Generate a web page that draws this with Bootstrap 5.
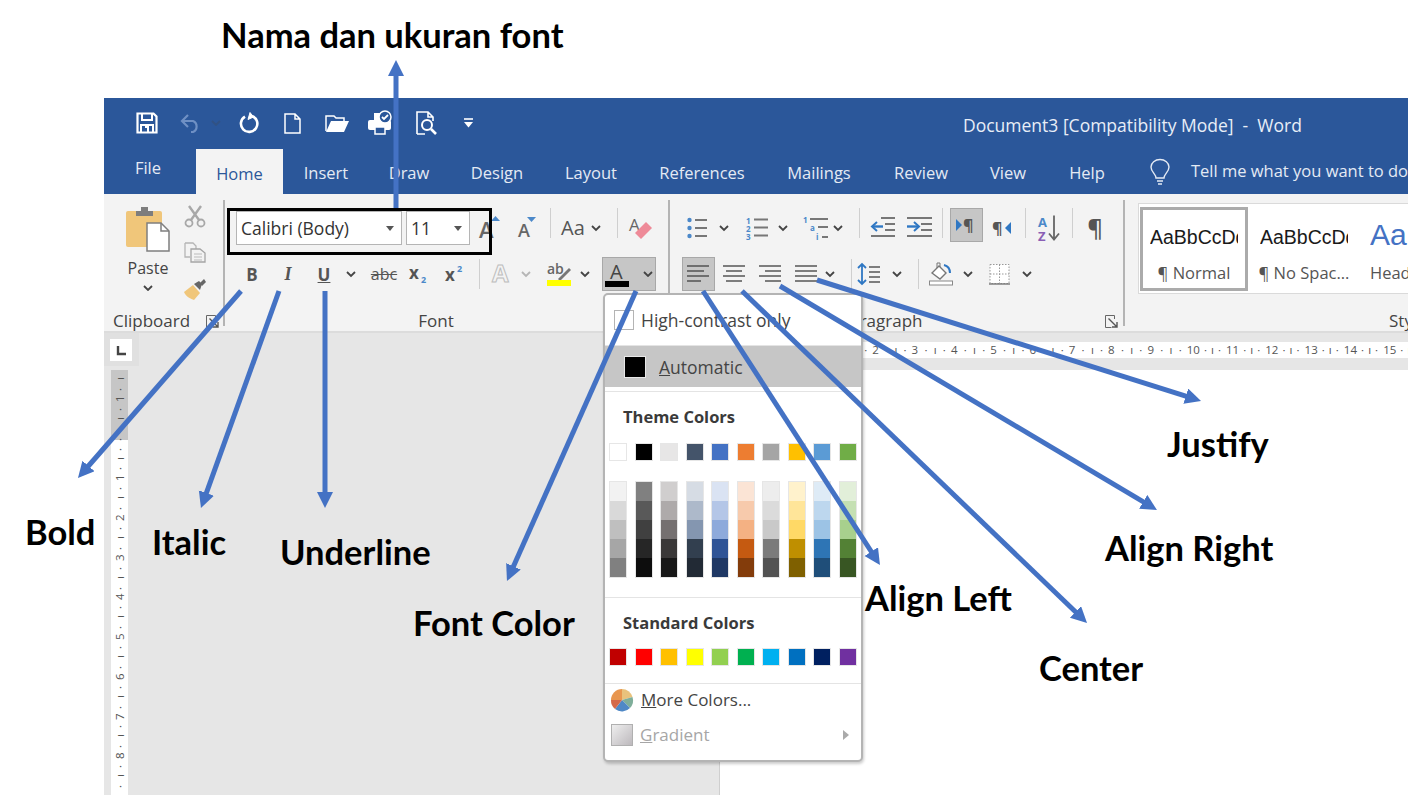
<!DOCTYPE html>
<html lang="id"><head><meta charset="utf-8"><title>Word font tools</title>
<link rel="stylesheet" href="https://cdn.jsdelivr.net/npm/bootstrap@5.3.0/dist/css/bootstrap.min.css">
<style>
html,body{margin:0;height:795px;overflow:hidden;background:#fff}
body{font-family:"Open Sans","Noto Sans",sans-serif;position:relative;color:#444}
svg{display:block;overflow:visible}
svg text{font-family:"Open Sans",sans-serif}
.note{position:absolute;font-family:Lato,"Liberation Sans",sans-serif;font-weight:700;font-size:34.5px;line-height:40px;color:#000;white-space:nowrap}
.n1{left:221px;top:15px}.n2{left:25px;top:512px}.n3{left:152px;top:522px}.n4{left:280px;top:532px}.n5{left:413px;top:603px}.n6{left:865px;top:578px}.n7{left:1039px;top:648px}.n8{left:1105px;top:528px}.n9{left:1167px;top:424px}
.overlay{position:absolute;left:0;top:0;width:1408px;height:795px;z-index:1100;pointer-events:none}
.word{margin-left:104px;margin-top:98px;width:1304px;height:697px;overflow:hidden;position:absolute;top:0;left:0}
.titlebar{height:50px;background:#2b579a;color:#e8eef7}
.qat{display:grid;grid-template-columns:76px 12px 38px 28px 58px 32px 54px 40px 42px;padding-left:5px;width:385px}
.qat>*,.tabs>*,.row1>*,.row2>*{justify-self:center;align-self:center}
.doc-title{margin:4px 0 0 474px;font-size:17.5px;white-space:pre}
.tabs{display:grid;grid-template-columns:92px 87px 86px 80px 96px 92px 130px 104px 100px 74px 84px 62px auto;height:46px;background:#2b579a;color:#e4eaf4;font-size:16.5px;padding-top:1px;line-height:1}
.tabs>span{padding-top:3px}
.tabs>.tab-file{padding:0 4px 6px 0}
.tabs>.tab-home{justify-self:stretch;align-self:stretch;background:#f3f3f3;color:#2b579a;text-align:center;padding-top:17px}
.tabs>.tab-tell{justify-self:start;white-space:nowrap;padding:0 0 1px}
.ribbon{height:139px;background:#f3f3f3;border-bottom:2px solid #dcdcdc;color:#555}
.grp{display:flex;flex-direction:column;height:137px;position:relative;flex:none}
.grp-clip{width:119px}.grp-font{width:443px}.grp-para{width:453px}.grp-styles{flex:1 1 0;min-width:0;overflow:hidden}
.vsep{width:2px;height:126px;background:#b4b4b4;margin-top:6px;flex:none}
.glabel{margin-top:auto;height:22px;padding-top:2px;font-size:17px;line-height:20px;color:#444;display:flex;align-items:center}
.row1,.row2{display:grid}
.row1>*{height:40px;display:flex;align-items:center;justify-content:center;align-self:start}
.row2>*{height:38px;display:flex;align-items:center;justify-content:center}
.font1{grid-template-columns:245px 38px 36px 8px 38px 8px 34px 14px;margin:14px 0 0 2px;height:47px}
.font2{grid-template-columns:36px 36px 36px 18px 48px 24px 47px 12px 22px 26px 40px 12px 76px;margin-left:9px;height:38px}
.para1{grid-template-columns:16px 38px 28px 24px 40px 6px 19px 46px 26px 11px 46px 26px 11px 46px 8px 30px;margin:14px 0 0 19px;height:47px}
.para2{grid-template-columns:32px 40px 32px 40px 8px 18px 34px 22px 11px 44px 10px 52px 4px;margin-left:12px;height:38px}
.fontbox{border:3px solid #000;width:265px;height:47px!important;display:flex;justify-self:start!important;gap:4px;padding:0 0 7px 6px;align-items:flex-start!important;justify-content:flex-start!important;z-index:2}
.combo{height:34px;background:#fff;border:1px solid #b5b5b5;display:flex;align-items:center;justify-content:space-between;padding:0 7px 0 4px;font-size:17.5px;color:#333}
.combo-name{width:166px}.combo-size{width:64px}
.tri{width:0;height:0;border:4px solid transparent;border-top:5px solid #555;border-bottom:0}
.vs{width:1px;height:30px!important;background:#cfcfcf}
.vs-end{justify-self:end!important}.vs-start{justify-self:start!important}
.gb{font:700 17px/1 "Open Sans",sans-serif;color:#555}
.gi{font:italic 600 18px/1 "Liberation Serif",serif;color:#555}
.pressed{width:54px;height:34px!important;background:#c6c6c6;border:1px solid #a8a8a8;gap:14px}
.pressed-sq{width:33px;height:34px!important;background:#c6c6c6;border:1.5px solid #a8a8a8}
.clip-main{display:flex;padding-left:18px;height:115px}
.paste{width:52px;display:flex;flex-direction:column;align-items:center;padding-top:12px;font-size:16px;color:#444;line-height:1}
.paste span{margin:9px 0 9px}
.clip-side{width:42px;display:flex;flex-direction:column;align-items:center;padding-top:11px;gap:15px}
.clip-label{padding-left:9px;justify-content:space-between;padding-right:4px}
.launch{width:13px;height:13px;flex:none}
.font-label{justify-content:center;padding-right:21px}
.para-label{padding-left:170px;justify-content:space-between;padding-right:5px}
.gallery{margin:9px 0 0 13px;height:91px;background:#fff;border:1px solid #dadada;border-right:0;display:flex;padding-top:3px;overflow:hidden}
.sty{width:112px;height:84px;flex:none;display:flex;flex-direction:column;align-items:center;overflow:hidden;font-size:16.5px;color:#555}
.sty b{font:400 19.5px/1 "Liberation Sans",sans-serif;color:#1a1a1a;margin-top:21px;height:37px;white-space:nowrap;width:88px;overflow:hidden}
.sty-on{width:108px;border:3px solid #ababab;margin-left:1px}
.sty-on b{margin-top:18px}
.sty small{font-size:16.5px;line-height:1;margin-top:0}
.sty-h{margin-left:-1px}
.sty-h b{font-size:30px;color:#4472c4;margin-top:13px;height:42px;width:90px}
.sty-h small{margin-top:3px;margin-left:11px;align-self:flex-start}
.styles-label{padding-left:264px;white-space:nowrap}
.workspace{height:510px;background:#e6e6e6;position:relative}
.topline{height:37px;display:flex}
.corner{width:35px;height:33px;background:#e0e0e0;padding:6px;flex:none}
.corner-in{width:22px;height:22px;background:#fff;display:flex;align-items:center;justify-content:center}
.hruler{margin:9px 0 0 581px;height:16px;background:linear-gradient(90deg,#c6c6c6 77px,#fff 77px);flex:1;display:flex;padding-left:113px;font-size:11.5px;line-height:16px;color:#555}
.hcell{width:39.3px;flex:none;display:flex;justify-content:space-between;padding-right:5px}
.pagearea{display:flex;height:473px}
.vruler{margin-left:7px;width:17px;background:linear-gradient(#c6c6c6 70px,#fff 70px);overflow:hidden;flex:none;font-size:11.5px;color:#555;text-align:center;line-height:1;padding-top:4px}
.vcell{height:39.7px;display:flex;flex-direction:column;justify-content:space-between;align-items:center}
.vlead{height:20px;display:flex;flex-direction:column;justify-content:space-evenly;align-items:center}
.vcell span,.vlead span{writing-mode:vertical-rl;transform:rotate(180deg);line-height:17px;height:10px;display:block}
.greyzone{width:592px;flex:none;border-right:1px solid #cfcfcf}
.paper{flex:1;background:#fff}
.fc-menu{position:absolute;left:603px;top:293px;width:260px;height:469px;margin:0;padding:0;border:2px solid #b4b4b4;border-radius:5px;background:#fff;box-shadow:1px 2px 3px rgba(0,0,0,.2);font-size:17.5px;color:#444;overflow:hidden}
.m-hc{height:50px;display:flex;align-items:center;padding-left:9px;gap:7px}
.m-hc i{width:20px;height:20px;border:1.5px solid #b4b4b4;flex:none}
.m-line{height:1px;background:#e4e4e4;margin:0}
.m-auto{height:41px;margin-top:1px;background:#c6c6c6;display:flex;align-items:center;padding-left:19px;gap:13px}
.m-auto span{margin-top:2px}
.m-auto i{width:22px;height:22px;background:#000;border:1px solid #e8e8e8;flex:none}
.m-head{font-weight:700;font-size:16.5px;color:#3a3a3a;padding-left:18px;line-height:20px}
.h-theme{margin-top:15px}.h-std{margin-top:15px}
.m-grid{display:grid;grid-template-columns:repeat(10,25.5px);padding-left:4px}
.m-theme{margin-top:16px}.m-shades{margin-top:20px}.m-standard{margin-top:15px}
.sw{display:block;width:18px;height:18px;border:1px solid #e6e6e6}
.col5{display:flex;flex-direction:column;width:18px;border:1px solid #e6e6e6}
.col5 span{height:19px}
.gap-a{margin-top:19px}.gap-b{margin-top:17px}
.m-row{height:38px;font-size:17px;display:flex;align-items:center;padding-left:5px;gap:7px;position:relative}
.m-more{height:32px}
.m-grad{color:#a6a6a6}
.m-grad i{width:22px;height:22px;background:linear-gradient(135deg,#eee,#bdb9bd);border:1.5px solid #b0b0b0;margin-left:1px;flex:none}
.m-tri{margin-left:auto;margin-right:12px;width:0;height:0;border:5px solid transparent;border-left:6px solid #aaa;border-right:0}
</style></head>
<body>
<svg width="0" height="0" class="position-absolute"><defs>
<symbol id="chev" viewBox="0 0 10 6"><path d="M1 1l4 4 4-4" fill="none" stroke="#444" stroke-width="1.8"/></symbol>
<symbol id="launch" viewBox="0 0 13 13"><path d="M.5 7V.5h9V4M.5 7v5.5h6" fill="none" stroke="#666"/><path d="M3.5 3.5l8 8M12 7v5H7" fill="none" stroke="#555" stroke-width="1.4"/></symbol>
<marker id="ah" markerUnits="userSpaceOnUse" markerWidth="18" markerHeight="18" refX="10" refY="8" orient="auto"><path d="M0 0L16 8L0 16z" fill="#4472c4"/></marker>
</defs></svg>

<div class="word">
  <div class="titlebar d-flex align-items-center">
    <div class="qat">
      <svg width="22" height="22" viewBox="0 0 22 22"><path d="M1.500 1.500h16l3 3v16h-19z" fill="none" stroke="#fff" stroke-width="2.200"/><path d="M6 2v6h10V2" fill="none" stroke="#fff" stroke-width="2"/><path d="M5 20v-7h12v7M9 15h3v5" fill="none" stroke="#fff" stroke-width="2"/></svg>
      <svg width="22" height="20" viewBox="0 0 22 20"><path d="M8 2L2 8l6 6M2 8h11a6 6 0 0 1 0 11h-2" fill="none" stroke="#6f90c4" stroke-width="2.200"/></svg>
      <svg width="10" height="6"><use href="#chev" opacity=".25"/></svg>
      <svg width="20" height="22" viewBox="0 0 20 22"><path d="M13 4a8.200 8.200 0 1 1-7 .6" fill="none" stroke="#fff" stroke-width="2.600"/><path d="M11 .5l3.500 4.500-5.500 2.500z" fill="#fff" stroke="#fff"/></svg>
      <svg width="17" height="21" viewBox="0 0 17 21"><path d="M1 1h10l5 5v14H1zM11 1v5h5" fill="none" stroke="#fff" stroke-width="1.500"/></svg>
      <svg width="25" height="20" viewBox="0 0 25 20"><path d="M1 18V3h8l2 2h8v3" fill="none" stroke="#fff" stroke-width="1.500"/><path d="M1 19l5-11h18l-5 11z" fill="#fff"/></svg>
      <svg width="26" height="26" viewBox="0 0 26 26"><rect x="1" y="10" width="23" height="10" rx="2" fill="#fff"/><rect x="7" y="3" width="11" height="8" fill="#fff"/><rect x="8" y="17" width="10" height="7" fill="#2b579a" stroke="#fff" stroke-width="1.500"/><circle cx="18" cy="7" r="6" fill="#2b579a" stroke="#fff" stroke-width="1.500"/><path d="M15 7l2 2 4-4" fill="none" stroke="#fff" stroke-width="1.800"/></svg>
      <svg width="22" height="25" viewBox="0 0 22 25"><path d="M1 23V1h11l5 5v4M12 1v5h5M9 23H1" fill="none" stroke="#fff" stroke-width="1.600"/><circle cx="11" cy="14" r="5" fill="none" stroke="#fff" stroke-width="2"/><path d="M15 18l5 5" stroke="#fff" stroke-width="2.600"/></svg>
      <svg width="9" height="10" viewBox="0 0 9 10"><path d="M0 1h9" stroke="#fff" stroke-width="1.600"/><path d="M0 4h9L4.500 9.500z" fill="#fff"/></svg>
    </div>
    <div class="doc-title">Document3 [Compatibility Mode]  -  Word</div>
  </div>
  <nav class="tabs">
    <span class="tab-file">File</span><span class="tab-home">Home</span><span>Insert</span><span>Draw</span><span>Design</span><span>Layout</span><span>References</span><span>Mailings</span><span>Review</span><span>View</span><span>Help</span>
    <svg width="20" height="26" viewBox="0 0 20 26"><path d="M6 19c0-4-5-6-5-11a9 7.500 0 0 1 18 0c0 5-5 7-5 11z" fill="none" stroke="#e4eaf4" stroke-width="1.400"/><path d="M7 22h6M8 25h4" stroke="#e4eaf4" stroke-width="1.400"/></svg>
    <span class="tab-tell">Tell me what you want to do</span>
  </nav>
  <div class="ribbon d-flex">
    <section class="grp grp-clip">
      <div class="clip-main">
        <div class="paste">
          <svg width="44" height="45" viewBox="0 0 44 45"><rect x="0" y="5" width="36" height="36" rx="2" fill="#f0c67a"/><path d="M10 5h5V1h7v4h5v5H10z" fill="#7d7d7d"/><path d="M21 17h14l8 8v20H21z" fill="#fff" stroke="#7f7f7f" stroke-width="1.500"/><path d="M35 17v8h8" fill="none" stroke="#7f7f7f" stroke-width="1.500"/></svg>
          <span>Paste</span>
          <svg width="10" height="6"><use href="#chev"/></svg>
        </div>
        <div class="clip-side">
          <svg width="22" height="22" viewBox="0 0 22 22"><path d="M5 1l10 14M17 1L7 15" stroke="#a8a8a8" stroke-width="2.400"/><circle cx="5" cy="18" r="3.500" fill="none" stroke="#a8a8a8" stroke-width="1.800"/><circle cx="17" cy="18" r="3.500" fill="none" stroke="#a8a8a8" stroke-width="1.800"/></svg>
          <svg width="22" height="21" viewBox="0 0 22 21"><path d="M1 1h8l3 3v3M1 1v14h5" fill="none" stroke="#b5b5b5" stroke-width="1.300"/><path d="M7 7h9l5 4v9H7z" fill="#f3f3f3" stroke="#a5a5a5" stroke-width="1.300"/><path d="M10 12h8M10 15h8M10 18h8" stroke="#bbb"/></svg>
          <svg width="24" height="22" viewBox="0 0 24 22"><path d="M1 14l9-7 7 8-6 7C8 21 3 19 1 14z" fill="#f0c67a"/><path d="M11 6l5-3 3 3-2 6z" fill="#666"/><path d="M17 5l4-4 2 3-4 4z" fill="#666"/></svg>
        </div>
      </div>
      <div class="glabel clip-label"><span>Clipboard</span><svg class="launch"><use href="#launch"/></svg></div>
    </section>
    <div class="vsep"></div>
    <section class="grp grp-font">
      <div class="row1 font1">
        <div class="fontbox"><div class="combo combo-name"><span>Calibri (Body)</span><i class="tri"></i></div><div class="combo combo-size"><span>11</span><i class="tri"></i></div></div>
        <svg width="26" height="24" viewBox="0 0 26 24"><text x="1" y="22" font-size="22" font-weight="600" fill="#666">A</text><path d="M13 5l4.500-5 4.500 5z" fill="#4b88c9"/></svg>
        <svg width="22" height="22" viewBox="0 0 22 22"><text x="1" y="20" font-size="18" font-weight="600" fill="#666">A</text><path d="M10 0h9l-4.500 5z" fill="#4b88c9"/></svg>
        <i class="vs"></i>
        <span class="fs-5 fst-normal">Aa</span>
        <svg width="10" height="6"><use href="#chev"/></svg>
        <i class="vs"></i>
        <svg width="24" height="24" viewBox="0 0 24 24"><text x="0" y="15" font-size="17" fill="#666">A</text><path d="M6 17l11-11 6 6-11 11z" fill="#ee8a98"/></svg>
      </div>
      <div class="row2 font2">
        <span class="gb">B</span><span class="gi">I</span><span class="gb text-decoration-underline">U</span>
        <svg width="10" height="6"><use href="#chev"/></svg>
        <span class="text-decoration-line-through">abc</span>
        <svg width="22" height="20" viewBox="0 0 22 20"><text x="0" y="15" font-size="17" font-weight="700" fill="#555">x</text><text x="12" y="19" font-size="9" font-weight="700" fill="#4b88c9">2</text></svg>
        <svg width="22" height="20" viewBox="0 0 22 20"><text x="0" y="17" font-size="17" font-weight="700" fill="#555">x</text><text x="12" y="8" font-size="9" font-weight="700" fill="#4b88c9">2</text></svg>
        <i class="vs vs-start"></i>
        <svg width="20" height="20" viewBox="0 0 20 20"><text x="0" y="18" font-size="24" font-weight="700" fill="#f3f3f3" stroke="#bdbdbd">A</text></svg>
        <svg width="10" height="6"><use href="#chev" opacity=".35"/></svg>
        <svg width="25" height="24" viewBox="0 0 25 24"><text x="0" y="12" font-size="14" font-weight="600" fill="#666">ab</text><path d="M11 17l11-11 2 2-11 11z" fill="#777"/><rect x="0" y="18" width="24" height="6" fill="#ff0"/></svg>
        <svg width="10" height="6"><use href="#chev"/></svg>
        <div class="pressed"><svg width="24" height="26" viewBox="0 0 24 26"><text x="5" y="18" font-size="20" fill="#444">A</text><rect x="0" y="20" width="24" height="6" fill="#000"/></svg><svg width="10" height="6"><use href="#chev"/></svg></div>
      </div>
      <div class="glabel font-label">Font</div>
    </section>
    <div class="vsep"></div>
    <section class="grp grp-para">
      <div class="row1 para1">
        <svg width="20" height="22" viewBox="0 0 20 22"><g fill="#4b88c9"><circle cx="2.500" cy="3" r="2.200"/><circle cx="2.500" cy="11" r="2.200"/><circle cx="2.500" cy="19" r="2.200"/></g><path d="M8 3h12M8 11h12M8 19h12" stroke="#777" stroke-width="1.800"/></svg>
        <svg width="10" height="6"><use href="#chev"/></svg>
        <svg width="22" height="23" viewBox="0 0 22 23"><g fill="#4b88c9" font-size="8" font-weight="700"><text x="0" y="7">1</text><text x="0" y="15">2</text><text x="0" y="23">3</text></g><path d="M8 3h14M8 11h14M8 19h14" stroke="#777" stroke-width="1.800"/></svg>
        <svg width="10" height="6"><use href="#chev"/></svg>
        <svg width="25" height="24" viewBox="0 0 25 24"><g fill="#4b88c9" font-size="8" font-weight="700"><text x="0" y="7">1</text><text x="7" y="15">a</text><text x="13" y="24">i</text></g><path d="M7 3h18M15 11h10M19 21h6" stroke="#777" stroke-width="1.800"/></svg>
        <svg width="10" height="6"><use href="#chev"/></svg>
        <i class="vs vs-end"></i>
        <svg width="24" height="22" viewBox="0 0 24 22"><path d="M10 1h14M14 7h10M14 13h10M0 19h24" stroke="#777" stroke-width="1.800"/><path d="M1 9.500h11" stroke="#2f77c3" stroke-width="2.400"/><path d="M6 5L1 9.500 6 14" fill="none" stroke="#2f77c3" stroke-width="2"/></svg>
        <svg width="25" height="22" viewBox="0 0 25 22"><path d="M0 1h25M14 7h11M14 13h11M0 19h25" stroke="#777" stroke-width="1.800"/><path d="M0 9.500h11" stroke="#2f77c3" stroke-width="2.400"/><path d="M7 5l5 4.500L7 14" fill="none" stroke="#2f77c3" stroke-width="2"/></svg>
        <i class="vs vs-end"></i>
        <div class="pressed-sq"><svg width="20" height="16" viewBox="0 0 20 16"><path d="M0 2l6 6-6 6z" fill="#2f77c3"/><text x="7" y="14" font-size="16" font-weight="700" fill="#555">¶</text></svg></div>
        <svg width="20" height="16" viewBox="0 0 20 16"><text x="0" y="14" font-size="16" font-weight="700" fill="#555">¶</text><path d="M19 2l-6 6 6 6z" fill="#2f77c3"/></svg>
        <i class="vs vs-end"></i>
        <svg width="22" height="27" viewBox="0 0 22 27"><text x="0" y="12" font-size="13" font-weight="700" fill="#4b88c9">A</text><text x="0" y="26" font-size="13" font-weight="700" fill="#8a5fb5">Z</text><path d="M16 1v24M11 19l5 6 5-6" fill="none" stroke="#666" stroke-width="1.800"/></svg>
        <i class="vs vs-start"></i>
        <span class="fs-4 fw-semibold">¶</span>
      </div>
      <div class="row2 para2">
        <div class="pressed-sq"><svg width="22" height="18" viewBox="0 0 22 18"><path d="M0 1h22M0 6h17M0 11h22M0 16h14" stroke="#6f6f6f" stroke-width="1.800"/></svg></div>
        <svg width="22" height="18" viewBox="0 0 22 18"><path d="M0 1h22M3 6h16M0 11h22M3 16h16" stroke="#7d7d7d" stroke-width="1.800"/></svg>
        <svg width="22" height="18" viewBox="0 0 22 18"><path d="M0 1h22M6 6h16M0 11h22M6 16h16" stroke="#7d7d7d" stroke-width="1.800"/></svg>
        <svg width="22" height="18" viewBox="0 0 22 18"><path d="M0 1h22M0 6h22M0 11h22M0 16h22" stroke="#7d7d7d" stroke-width="1.800"/></svg>
        <svg width="10" height="6"><use href="#chev"/></svg>
        <i class="vs vs-end"></i>
        <svg width="22" height="24" viewBox="0 0 22 24"><path d="M4 2v20M0 6l4-4 4 4M0 18l4 4 4-4" fill="none" stroke="#2f77c3" stroke-width="1.800"/><path d="M11 5h11M11 10h11M11 15h11M11 20h11" stroke="#7d7d7d" stroke-width="1.800"/></svg>
        <svg width="10" height="6"><use href="#chev"/></svg>
        <i class="vs vs-end"></i>
        <svg width="24" height="24" viewBox="0 0 24 24"><path d="M3 11l7-7 7 7-6 6z" fill="#fff" stroke="#777" stroke-width="1.400"/><path d="M8 6V1h3v4" fill="none" stroke="#777"/><path d="M15 3c4 1 6 4 6 8" fill="none" stroke="#2f77c3" stroke-width="2"/><rect x="0.500" y="19" width="23" height="4" fill="#fff" stroke="#888"/></svg>
        <svg width="10" height="6"><use href="#chev"/></svg>
        <svg width="21" height="21" viewBox="0 0 21 21"><path d="M1 1h19v19H1zM10.500 1v19M1 10.500h19" fill="#fff" stroke="#999" stroke-dasharray="1.500 1.500"/><path d="M0 20.500h21" stroke="#777" stroke-width="1.400"/></svg>
        <svg width="10" height="6"><use href="#chev"/></svg>
      </div>
      <div class="glabel para-label"><span>Paragraph</span><svg class="launch"><use href="#launch"/></svg></div>
    </section>
    <div class="vsep"></div>
    <section class="grp grp-styles">
      <div class="gallery">
        <div class="sty sty-on"><b>AaBbCcDdEe</b><small>¶ Normal</small></div>
        <div class="sty"><b>AaBbCcDdEe</b><small>¶ No Spac...</small></div>
        <div class="sty sty-h"><b>AaBbCc</b><small>Heading 1</small></div>
      </div>
      <div class="glabel styles-label mt-auto">Styles</div>
    </section>
  </div>
  <div class="workspace">
    <div class="topline">
      <div class="corner"><div class="corner-in"><svg width="11" height="11" viewBox="0 0 11 11"><path d="M2 1v8h8" fill="none" stroke="#444" stroke-width="2.400"/></svg></div></div>
      <div class="hruler">
        <span class="hcell"><span>1</span><span>·</span><span>ı</span><span>·</span></span><span class="hcell"><span>2</span><span>·</span><span>ı</span><span>·</span></span><span class="hcell"><span>3</span><span>·</span><span>ı</span><span>·</span></span><span class="hcell"><span>4</span><span>·</span><span>ı</span><span>·</span></span><span class="hcell"><span>5</span><span>·</span><span>ı</span><span>·</span></span><span class="hcell"><span>6</span><span>·</span><span>ı</span><span>·</span></span><span class="hcell"><span>7</span><span>·</span><span>ı</span><span>·</span></span><span class="hcell"><span>8</span><span>·</span><span>ı</span><span>·</span></span><span class="hcell"><span>9</span><span>·</span><span>ı</span><span>·</span></span><span class="hcell"><span>10</span><span>·</span><span>ı</span><span>·</span></span><span class="hcell"><span>11</span><span>·</span><span>ı</span><span>·</span></span><span class="hcell"><span>12</span><span>·</span><span>ı</span><span>·</span></span><span class="hcell"><span>13</span><span>·</span><span>ı</span><span>·</span></span><span class="hcell"><span>14</span><span>·</span><span>ı</span><span>·</span></span><span class="hcell"><span>15</span><span>·</span><span>ı</span><span>·</span></span>
      </div>
    </div>
    <div class="pagearea">
      <div class="vruler">
        <div class="vlead"><span>ı</span><span>·</span></div>
        <div class="vcell"><span>1</span><span>·</span><span>ı</span><span>·</span></div><div class="vcell"><span>·</span><span>·</span><span>ı</span><span>·</span></div><div class="vcell"><span>1</span><span>·</span><span>ı</span><span>·</span></div><div class="vcell"><span>2</span><span>·</span><span>ı</span><span>·</span></div><div class="vcell"><span>3</span><span>·</span><span>ı</span><span>·</span></div><div class="vcell"><span>4</span><span>·</span><span>ı</span><span>·</span></div><div class="vcell"><span>5</span><span>·</span><span>ı</span><span>·</span></div><div class="vcell"><span>6</span><span>·</span><span>ı</span><span>·</span></div><div class="vcell"><span>7</span><span>·</span><span>ı</span><span>·</span></div><div class="vcell"><span>8</span><span>·</span><span>ı</span><span>·</span></div>
      </div>
      <div class="greyzone"></div>
      <div class="paper"></div>
    </div>
  </div>
</div>

<div class="dropdown-menu show fc-menu">
  <div class="m-hc"><i></i><span>High-contrast only</span></div>
  <div class="m-line"></div>
  <div class="m-auto"><i></i><span><u>A</u>utomatic</span></div>
  <div class="m-line mt-1"></div>
  <div class="m-head h-theme">Theme Colors</div>
  <div class="m-grid m-theme">
    <span class="sw" style="background:#ffffff"></span><span class="sw" style="background:#000000"></span><span class="sw" style="background:#e7e6e6"></span><span class="sw" style="background:#44546a"></span><span class="sw" style="background:#4472c4"></span><span class="sw" style="background:#ed7d31"></span><span class="sw" style="background:#a5a5a5"></span><span class="sw" style="background:#ffc000"></span><span class="sw" style="background:#5b9bd5"></span><span class="sw" style="background:#70ad47"></span>
  </div>
  <div class="m-grid m-shades">
    <div class="col5"><span style="background:#f2f2f2"></span><span style="background:#d9d9d9"></span><span style="background:#bfbfbf"></span><span style="background:#a6a6a6"></span><span style="background:#808080"></span></div>
    <div class="col5"><span style="background:#808080"></span><span style="background:#595959"></span><span style="background:#404040"></span><span style="background:#262626"></span><span style="background:#0d0d0d"></span></div>
    <div class="col5"><span style="background:#d0cece"></span><span style="background:#aeaaaa"></span><span style="background:#757070"></span><span style="background:#3a3838"></span><span style="background:#171717"></span></div>
    <div class="col5"><span style="background:#d6dce4"></span><span style="background:#adb9ca"></span><span style="background:#8496b0"></span><span style="background:#323f4f"></span><span style="background:#222a35"></span></div>
    <div class="col5"><span style="background:#dae3f3"></span><span style="background:#b4c6e7"></span><span style="background:#8eaadb"></span><span style="background:#2f5496"></span><span style="background:#1f3864"></span></div>
    <div class="col5"><span style="background:#fbe4d5"></span><span style="background:#f7caac"></span><span style="background:#f4b183"></span><span style="background:#c55a11"></span><span style="background:#833c0b"></span></div>
    <div class="col5"><span style="background:#ededed"></span><span style="background:#dbdbdb"></span><span style="background:#c9c9c9"></span><span style="background:#7b7b7b"></span><span style="background:#525252"></span></div>
    <div class="col5"><span style="background:#fff2cc"></span><span style="background:#ffe599"></span><span style="background:#ffd966"></span><span style="background:#bf8f00"></span><span style="background:#7f6000"></span></div>
    <div class="col5"><span style="background:#deebf6"></span><span style="background:#bdd7ee"></span><span style="background:#9cc3e5"></span><span style="background:#2e75b5"></span><span style="background:#1f4e79"></span></div>
    <div class="col5"><span style="background:#e2efd9"></span><span style="background:#c5e0b3"></span><span style="background:#a8d08d"></span><span style="background:#538135"></span><span style="background:#385623"></span></div>
  </div>
  <div class="m-line gap-a"></div>
  <div class="m-head h-std">Standard Colors</div>
  <div class="m-grid m-standard">
    <span class="sw" style="background:#c00000"></span><span class="sw" style="background:#ff0000"></span><span class="sw" style="background:#ffc000"></span><span class="sw" style="background:#ffff00"></span><span class="sw" style="background:#92d050"></span><span class="sw" style="background:#00b050"></span><span class="sw" style="background:#00b0f0"></span><span class="sw" style="background:#0070c0"></span><span class="sw" style="background:#002060"></span><span class="sw" style="background:#7030a0"></span>
  </div>
  <div class="m-line gap-b"></div>
  <div class="m-row m-more"><svg width="24" height="24" viewBox="0 0 24 24"><path d="M12 12L12 1A11 11 0 0 1 22.500 9z" fill="#e9c27c"/><path d="M12 12L22.500 9A11 11 0 0 1 20 20z" fill="#7fae9a"/><path d="M12 12L20 20A11 11 0 0 1 5 21z" fill="#4f88c6"/><path d="M12 12L5 21A11 11 0 0 1 1 12z" fill="#d4694a"/><path d="M12 12L1 12A11 11 0 0 1 12 1z" fill="#e8964f"/></svg><span><u>M</u>ore Colors...</span></div>
  <div class="m-row m-grad"><i></i><span><u>G</u>radient</span><span class="m-tri"></span></div>
</div>

<svg class="overlay" viewBox="0 0 1408 795"><g stroke="#4472c4" stroke-width="5" fill="none">
<path d="M396 208V66" marker-end="url(#ah)"/>
<path d="M241 291L81.900 473.500" marker-end="url(#ah)"/>
<path d="M279 291L203 502.400" marker-end="url(#ah)"/>
<path d="M325 291V502" marker-end="url(#ah)"/>
<path d="M636 291L509.400 575.500" marker-end="url(#ah)"/>
<path d="M703 291L876.700 560" marker-end="url(#ah)"/>
<path d="M742 291L1082.700 618.800" marker-end="url(#ah)"/>
<path d="M780 286L1151.800 506.900" marker-end="url(#ah)"/>
<path d="M817 280L1195.300 399.200" marker-end="url(#ah)"/>
</g></svg>
<div class="note n1">Nama dan ukuran font</div>
<div class="note n2">Bold</div>
<div class="note n3">Italic</div>
<div class="note n4">Underline</div>
<div class="note n5">Font Color</div>
<div class="note n6">Align Left</div>
<div class="note n7">Center</div>
<div class="note n8">Align Right</div>
<div class="note n9">Justify</div>
</body></html>
